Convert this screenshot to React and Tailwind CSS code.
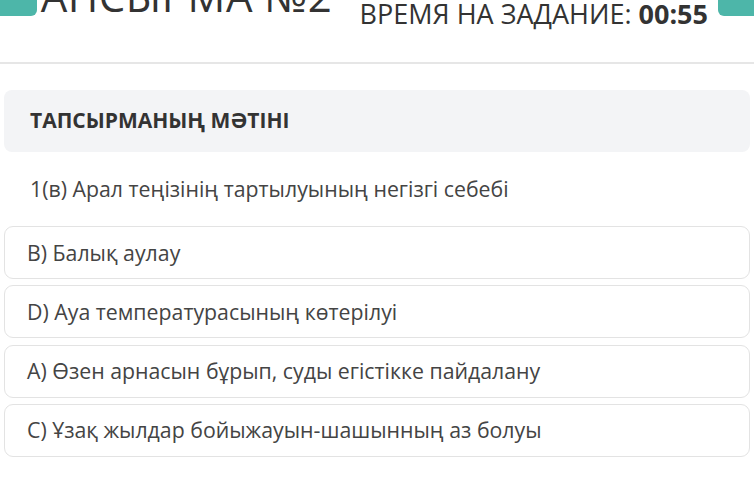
const options = [
  'B) Балық аулау',
  'D) Ауа температурасының көтерілуі',
  'A) Өзен арнасын бұрып, суды егістікке пайдалану',
  'C) Ұзақ жылдар бойыжауын-шашынның аз болуы',
];

const App = () => {
  return (
    <div className="w-[754px] h-[493px] overflow-hidden bg-white font-['Open_Sans',sans-serif] text-[#444]">
      <div className="h-[64px] border-b-2 border-[#e6e6e6] flex items-start justify-between overflow-hidden">
        <div className="flex items-start">
          <div className="w-[37px] h-[16px] bg-[#4db6a9] rounded-br-[6px] relative z-10" />
          <h1 className="text-[42px] leading-none mt-[-25px] ml-[-20px] text-[#333] tracking-[0.5px]">ТАПСЫРМА №2</h1>
        </div>
        <div className="flex items-start">
          <p className="text-[27px] leading-[1.1] mt-[-1px] text-[#333] mr-[10px]">
            ВРЕМЯ НА ЗАДАНИЕ: <span className="font-bold">00:55</span>
          </p>
          <div className="w-[36px] h-[16px] bg-[#4db6a9] rounded-bl-[6px]" />
        </div>
      </div>

      <div className="px-[4px] pt-[26px]">
        <div className="h-[62px] bg-[#f3f4f6] rounded-[8px] flex items-center px-[26px]">
          <h3 className="text-[21px] font-bold text-[#333]">ТАПСЫРМАНЫҢ МӘТІНІ</h3>
        </div>
        <p className="text-[21.3px] px-[26px] h-[74px] flex items-center">1(в) Арал теңізінің тартылуының негізгі себебі</p>
        <div className="flex flex-col gap-[6.3px]">
          {options.map(o => (
            <div key={o} className="h-[53px] border border-[#e3e3e3] rounded-[9px] flex items-center px-[22px]">
              <span className="text-[21.3px]">{o}</span>
            </div>
          ))}
        </div>
      </div>
    </div>
  );
};

export default App;
